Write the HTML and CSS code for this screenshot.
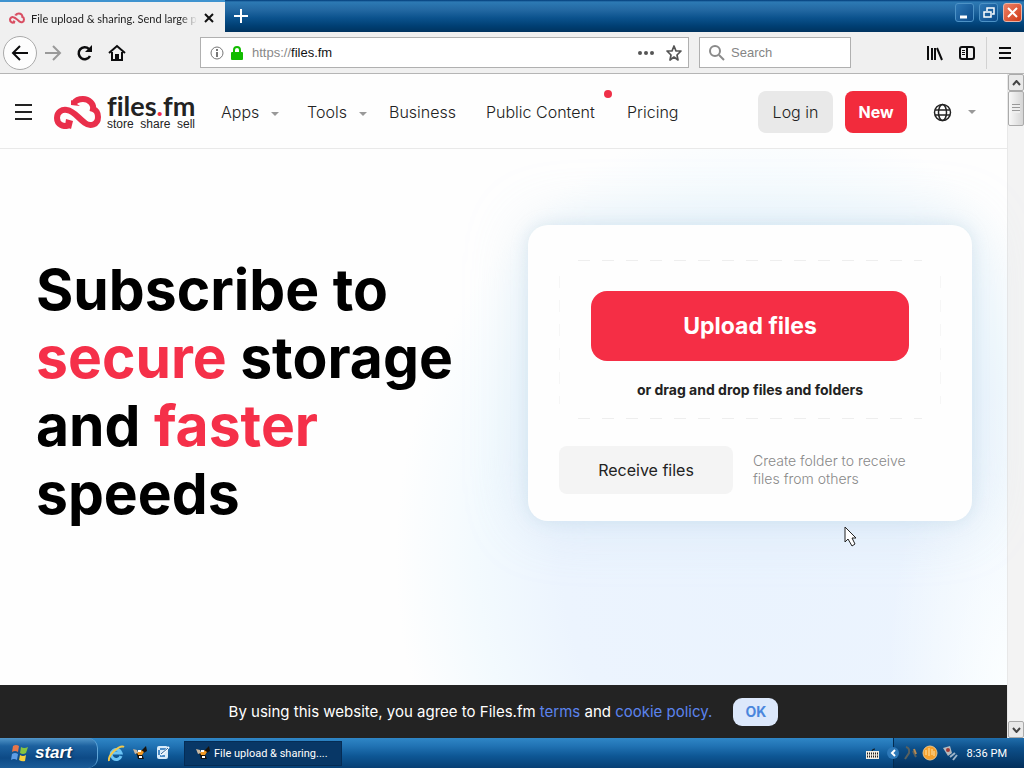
FILE: index.html
```html
<!DOCTYPE html>
<html lang="en">
<head>
<meta charset="utf-8">
<title>File upload &amp; sharing. Send large files</title>
<link rel="stylesheet" href="styles.css">
</head>
<body>
<svg class="defs" aria-hidden="true">
  <defs>
    <symbol id="cloud" viewBox="0 0 47 33">
      <path d="M16 29C9 32 3 28 3 22C3 16 8 13 13 14C20 15 24 22 31 27C36 31 44 29 44 21C44 17 42 14 39 13C40 8 35 3 29 3C26 3 22 4 20 7" fill="none" stroke="currentColor" stroke-width="6"/>
      <path d="M17 4L26 10L17 9ZM12 23L19 25L17 33L11 30Z" fill="currentColor"/>
    </symbol>
    <symbol id="butterfly" viewBox="0 0 16 14">
      <path d="M1 3L7 7L14 0L15 5L10 8L12 13L6 13L5 9Z" fill="#16120d"/>
      <path d="M5 6L9 4L12 6L10 9L6 9Z" fill="#f39a24"/>
      <path d="M1 3L5 4L6 7L3 8Z" fill="#c9b8a2"/>
      <path d="M6 5H9M7 11H10" stroke="#fff" stroke-width="2"/>
    </symbol>
  </defs>
</svg>

<header class="browser">
  <div class="titlebar">
    <div class="tab">
      <svg class="tab-logo"><use href="#cloud"/></svg>
      <span class="tab-title">File upload &amp; sharing. Send large p</span>
      <button class="plain" aria-label="Close tab"><svg width="12" height="12" viewBox="0 0 12 12"><path d="M2 2L10 10M10 2L2 10" stroke="#111" stroke-width="2"/></svg></button>
    </div>
    <button class="plain new-tab" aria-label="New tab"><svg width="14" height="14" viewBox="0 0 14 14"><path d="M7 0V14M0 7H14" stroke="#fff" stroke-width="2"/></svg></button>
    <div class="window-buttons">
      <button class="win" aria-label="Minimize"><svg width="18" height="18" viewBox="0 0 18 18"><path d="M4 13H11" stroke="#fff" stroke-width="3"/></svg></button>
      <button class="win" aria-label="Restore"><svg width="18" height="18" viewBox="0 0 18 18"><path d="M7 7V4H14V10H12M4 8H11V13H4Z" fill="none" stroke="#fff" stroke-width="1.500"/></svg></button>
      <button class="win win-close" aria-label="Close"><svg width="18" height="18" viewBox="0 0 18 18"><path d="M4 4L13 13M13 4L4 13" stroke="#fff" stroke-width="2"/></svg></button>
    </div>
  </div>
  <div class="toolbar">
    <div class="nav-buttons">
      <button class="plain back" aria-label="Back"><svg width="18" height="18" viewBox="0 0 18 18"><path d="M17 9H3M9 2L2 9L9 16" fill="none" stroke="#0c0c0d" stroke-width="2"/></svg></button>
      <button class="plain" aria-label="Forward"><svg width="18" height="18" viewBox="0 0 18 18"><path d="M1 9H15M9 2L16 9L9 16" fill="none" stroke="#9a9a9a" stroke-width="2"/></svg></button>
      <button class="plain" aria-label="Reload"><svg width="18" height="18" viewBox="0 0 18 18"><path d="M14 12A6 6 0 1 1 13 5" fill="none" stroke="#0c0c0d" stroke-width="2.500"/><path d="M16 1V8H9Z" fill="#0c0c0d"/></svg></button>
      <button class="plain" aria-label="Home"><svg width="18" height="18" viewBox="0 0 18 18"><path d="M1 9L9 2L17 9M4 8V16H14V8" fill="none" stroke="#0c0c0d" stroke-width="2"/><path d="M7 16V10H11V16Z" fill="#0c0c0d"/></svg></button>
    </div>
    <div class="field address">
      <svg width="14" height="14" viewBox="0 0 14 14"><circle cx="7" cy="7" r="6" fill="none" stroke="#777"/><path d="M7 6V11M7 3V5" stroke="#777" stroke-width="2"/></svg>
      <svg width="14" height="16" viewBox="0 0 14 16"><path d="M4 8V5A3 3 0 0 1 10 5V8" fill="none" stroke="#12bc00" stroke-width="2"/><rect x="1" y="7" width="12" height="8" rx="1" fill="#12bc00"/></svg>
      <a class="url" href="#">https://<b>files.fm</b></a>
      <button class="plain" aria-label="Page actions"><svg width="16" height="16" viewBox="0 0 16 16" fill="#555"><circle cx="2" cy="8" r="2"/><circle cx="8" cy="8" r="2"/><circle cx="14" cy="8" r="2"/></svg></button>
      <button class="plain" aria-label="Bookmark"><svg width="16" height="16" viewBox="0 0 16 16"><path d="M8 1L10 6L15 6L11 10L12 15L8 12L4 15L5 10L1 6L6 6Z" fill="none" stroke="#555" stroke-width="1.700" stroke-linejoin="round"/></svg></button>
    </div>
    <label class="field search">
      <svg width="17" height="17" viewBox="0 0 17 17"><circle cx="7" cy="7" r="5" fill="none" stroke="#8a8a8a" stroke-width="2"/><path d="M11 11L16 16" stroke="#8a8a8a" stroke-width="2"/></svg>
      <input type="search" placeholder="Search" aria-label="Search">
    </label>
    <div class="tools">
      <button class="plain" aria-label="Library"><svg width="16" height="16" viewBox="0 0 16 16"><path d="M1 1V15M5 3V15M8 3V15M10 3L15 15" stroke="#0c0c0d" stroke-width="2"/></svg></button>
      <button class="plain" aria-label="Sidebars"><svg width="16" height="16" viewBox="0 0 16 16"><rect x="1" y="2" width="14" height="12" rx="2" fill="none" stroke="#0c0c0d" stroke-width="2"/><path d="M8 2V14" stroke="#0c0c0d" stroke-width="2"/><path d="M3 5.500H6M3 7.500H6M3 9.500H6" stroke="#0c0c0d"/></svg></button>
      <span class="separator"></span>
      <button class="plain" aria-label="Menu"><svg width="14" height="14" viewBox="0 0 14 14"><path d="M1 2H13M1 7H13M1 12H13" stroke="#0c0c0d" stroke-width="2"/></svg></button>
    </div>
  </div>
</header>

<div class="viewport">
  <div class="page">
    <header class="site-header">
      <button class="plain burger" aria-label="Open menu"><svg width="17" height="16" viewBox="0 0 17 16"><path d="M0 1H17M0 8H17M0 15H17" stroke="#222" stroke-width="2"/></svg></button>
      <a class="logo" href="#">
        <svg class="logo-mark"><use href="#cloud"/></svg>
        <span class="logo-text"><span class="logo-name">files<i>.</i>fm</span><span class="logo-tag">store&nbsp; share&nbsp; sell</span></span>
      </a>
      <nav class="menu">
        <a class="has-menu" href="#">Apps</a>
        <a class="has-menu" href="#">Tools</a>
        <a href="#">Business</a>
        <a class="has-dot" href="#">Public Content</a>
        <a href="#">Pricing</a>
      </nav>
      <div class="account">
        <button class="btn login">Log in</button>
        <button class="btn new">New</button>
        <button class="plain language" aria-label="Language"><svg width="19" height="19" viewBox="0 0 19 19" fill="none" stroke="#222" stroke-width="1.500"><circle cx="9.500" cy="9.500" r="8"/><ellipse cx="9.500" cy="9.500" rx="4" ry="8"/><path d="M2 7H17M2 12H17"/></svg></button>
      </div>
    </header>

    <main class="hero">
      <h1>Subscribe to <em>secure</em> storage and <em>faster</em> speeds</h1>
      <section class="card">
        <div class="dropzone">
          <button class="upload">Upload files</button>
          <p>or drag and drop files and folders</p>
        </div>
        <div class="receive">
          <button>Receive files</button>
          <p>Create folder to receive files from others</p>
        </div>
        <svg class="cursor" width="14" height="22" viewBox="0 0 14 22"><path d="M1 1V16L4 13L8 20L11 18L8 12H12Z" fill="#fff" stroke="#222"/></svg>
      </section>
    </main>

    <footer class="cookies">
      <p>By using this website, you agree to Files.fm <a href="#">terms</a> and <a href="#">cookie policy.</a></p>
      <button>OK</button>
    </footer>
  </div>
  <div class="scrollbar">
    <button aria-label="Scroll up"><svg width="9" height="6" viewBox="0 0 9 6"><path d="M1 5L4.500 1L8 5" fill="none" stroke="#444" stroke-width="2"/></svg></button>
    <span class="thumb"></span>
    <button class="down" aria-label="Scroll down"><svg width="9" height="6" viewBox="0 0 9 6"><path d="M1 1L4.500 5L8 1" fill="none" stroke="#444" stroke-width="2"/></svg></button>
  </div>
</div>

<footer class="taskbar">
  <button class="start"><svg width="18" height="18" viewBox="0 0 18 18"><path d="M2 2Q5 0 8 2L7 8Q4 6 1 8Z" fill="#e8764a"/><path d="M10 3Q13 5 17 3L15 9Q12 11 9 9Z" fill="#86c440"/><path d="M1 10Q4 8 7 10L6 16Q3 14 0 16Z" fill="#5e9de6"/><path d="M9 11Q12 13 15 11L14 17Q11 18 8 16Z" fill="#f6d03c"/></svg>start</button>
  <div class="quick">
    <button class="plain" aria-label="Internet Explorer"><svg width="17" height="17" viewBox="0 0 17 17"><path d="M13 11A5 5 0 1 1 13 8H5" fill="none" stroke="#6cc4f5" stroke-width="3"/><path d="M1 16Q0 12 6 6Q13 0 16 2" fill="none" stroke="#f2c94c" stroke-width="2"/></svg></button>
    <button class="plain" aria-label="Web browser"><svg width="16" height="14"><use href="#butterfly"/></svg></button>
    <button class="plain" aria-label="Show desktop"><svg width="16" height="16" viewBox="0 0 16 16"><rect x="2" y="1" width="11" height="13" rx="2" fill="#d9ecfa"/><path d="M5 4H11M5 11H10M4 5V10" stroke="#4a8cc7" stroke-width="2"/><path d="M6 10L14 2" stroke="#fff" stroke-width="2"/><path d="M6 9L13 3" stroke="#245f96"/></svg></button>
  </div>
  <button class="task"><svg width="16" height="14"><use href="#butterfly"/></svg>File upload &amp; sharing....</button>
  <svg class="keyboard" width="13" height="11" viewBox="0 0 13 11"><path d="M6 3Q6 1 9 1" fill="none" stroke="#111"/><rect y="3" width="13" height="8" fill="#f3efe4"/><path d="M1 5.500H12M1 8.500H12" stroke="#222" stroke-width="2" stroke-dasharray="1 1"/></svg>
  <div class="tray">
    <button class="plain expand" aria-label="Show hidden icons"><svg width="12" height="14" viewBox="0 0 12 14"><circle cx="6" cy="7" r="6" fill="#2d78b8"/><path d="M8 4L5 7L8 10" fill="none" stroke="#fff" stroke-width="2"/></svg></button>
    <svg width="15" height="16" viewBox="0 0 15 16"><path d="M3 2Q7 3 6 8L2 14M10 6L13 12" fill="none" stroke="#59615f" stroke-width="2"/><path d="M11 4L13 9" stroke="#b98b52" stroke-width="2"/></svg>
    <svg width="16" height="16" viewBox="0 0 16 16"><circle cx="8" cy="8" r="7" fill="#f5a02c" stroke="#e9c48a"/><path d="M4 10V5M7 11V3M10 10V4M12 11V6" stroke="#ffe3a8"/></svg>
    <svg width="16" height="16" viewBox="0 0 16 16"><path d="M1 3L8 1L10 8L6 11Z" fill="#b5b9bd"/><circle cx="6" cy="5" r="2" fill="#a33b36"/><path d="M8 12L13 8M11 15L15 10" stroke="#9cb4c9" stroke-width="2"/></svg>
    <time>8:36 PM</time>
  </div>
</footer>
</body>
</html>
```
FILE: styles.css
```css
* { box-sizing: border-box; }
body {
  margin: 0;
  min-height: 100vh;
  display: flex;
  flex-direction: column;
  font-family: Inter, "Liberation Sans", sans-serif;
  background: #fefefe;
  color: #222;
}
p, h1 { margin: 0; }
a { color: inherit; text-decoration: none; }
button { font: inherit; color: inherit; border: 0; padding: 0; }
.defs { position: absolute; width: 0; height: 0; }
.plain { background: none; display: flex; align-items: center; justify-content: center; }
svg { display: block; flex: none; }

/* Browser chrome */
.browser { font: 13px "Liberation Sans", Arial, sans-serif; }
.titlebar {
  height: 32px;
  display: flex;
  align-items: stretch;
  background: linear-gradient(#003a77, #2d7ab4 2px, #2368a2 10px, #0b528d 18px, #003f73 26px, #00335f);
}
.tab {
  width: 225px;
  display: flex;
  align-items: center;
  padding: 2px 12px 0 9px;
  gap: 6px;
  background: #f0f0f0;
  border-top: 2px solid #3f93cf;
  font: 11px Lato, sans-serif;
}
.tab-logo { width: 16px; height: 12px; color: #d94e62; }
.tab-title {
  flex: 1;
  white-space: nowrap;
  mask-image: linear-gradient(90deg, #000 90%, transparent);
}
.new-tab { width: 32px; }
.window-buttons { margin-left: auto; display: flex; gap: 5px; padding: 3px 2px 0 0; }
.win {
  width: 19px;
  height: 19px;
  border: 1px solid #4d92c6;
  border-radius: 3px;
  background: linear-gradient(135deg, #2d77b5, #0b4b8a);
}
.win-close { border-color: #e9b3a5; background: linear-gradient(135deg, #ee8165, #cf3a18); }
.toolbar {
  height: 42px;
  display: flex;
  align-items: center;
  background: #f0f0f0;
  border-bottom: 1px solid #b5b5b5;
  padding: 0 9px 0 3px;
}
.nav-buttons { display: flex; align-items: center; gap: 14px; width: 197px; }
.back { width: 34px; height: 34px; border: 1px solid #aaa; border-radius: 50%; background: #fdfdfd; }
.nav-buttons .back { margin-right: -7px; }
.field {
  height: 31px;
  display: flex;
  align-items: center;
  background: #fff;
  border: 1px solid #b0b0b0;
}
.address { flex: 1; padding: 0 6px 0 9px; gap: 6px; }
.url { flex: 1; color: #888; padding-left: 2px; }
.url b { font-weight: 400; color: #111; }
.address .plain { margin-left: 6px; }
.search { width: 152px; margin-left: 10px; padding: 0 8px; gap: 6px; }
.search input { flex: 1; min-width: 0; border: 0; padding: 0; outline: 0; font: inherit; background: none; }
.search input::placeholder { color: #858585; }
.tools { width: 164px; display: flex; align-items: center; justify-content: flex-end; gap: 16px; padding-right: 3px; }
.separator { width: 1px; height: 32px; background: #d2d2d2; }
.tools .separator { margin: 0 -5px; }

/* Page */
.viewport { flex: 1; display: flex; }
.page { flex: 1; display: flex; flex-direction: column; min-width: 0; }
.site-header {
  height: 75px;
  display: flex;
  align-items: center;
  padding: 2px 31px 0 15px;
  border-bottom: 1px solid #e9e9e9;
  font-size: 16px;
  font-weight: 300;
}
.burger { margin-right: 22px; }
.logo { display: flex; align-items: center; gap: 6px; width: 167px; }
.logo-mark { width: 47px; height: 33px; color: #e92f4b; }
.logo-text { display: flex; flex-direction: column; }
.logo-name { font: 700 27px/24px Lato, sans-serif; font-variant-ligatures: none; }
.logo-name i { color: #f22e46; font-style: normal; }
.logo-tag { font: 12px/12px "Liberation Sans", sans-serif; }
.menu { display: grid; grid-template-columns: 86px 82px 97px 141px auto; }
.has-menu::after, .language::after {
  content: "";
  display: inline-block;
  border: 4px solid transparent;
  border-top-color: #999;
  border-bottom: 0;
  margin-left: 12px;
  vertical-align: middle;
}
.has-dot::after {
  content: "";
  position: absolute;
  width: 8px;
  height: 8px;
  margin: -12px 0 0 9px;
  border-radius: 50%;
  background: #ef3048;
}
.account { margin-left: auto; display: flex; align-items: center; gap: 12px; }
.btn { height: 42px; border-radius: 8px; }
.login { width: 75px; background: #e9e9e9; }
.new { width: 62px; background: #f22b3c; color: #fff; font-weight: 700; }
.language { margin-left: 14px; gap: 4px; }
.hero {
  flex: 1;
  display: grid;
  grid-template-columns: 1fr 444px;
  align-items: start;
  gap: 40px;
  padding: 76px 35px 0 36px;
  background:
    radial-gradient(ellipse 120px 300px at 100% 100%, #fbfeff, transparent),
    radial-gradient(ellipse 370px 440px at 76% 76%, #eaf3fe 0, #ecf4fe 55%, #f3fafe 78%, #fefefe 100%);
}
h1 { font-size: 57px; line-height: 68px; font-weight: 700; color: #000; padding-top: 31px; }
h1 em { color: #f53049; font-style: normal; }
.card {
  position: relative;
  padding: 35px 31px 27px;
  border-radius: 20px;
  background: #fefefe;
  box-shadow: 0 0 60px #b4d3e860, 0 0 16px #b4cfe060;
}
.dropzone {
  --dash: #eee 0 12px, transparent 12px 24px;
  height: 159px;
  padding: 31px 32px 0;
  background:
    repeating-linear-gradient(90deg, var(--dash)) top / 344px 1px no-repeat,
    repeating-linear-gradient(90deg, var(--dash)) bottom / 344px 1px no-repeat,
    repeating-linear-gradient(#f6f6f6 0 12px, transparent 12px 24px) left / 1px 128px no-repeat,
    repeating-linear-gradient(#f6f6f6 0 12px, transparent 12px 24px) right / 1px 128px no-repeat;
  text-align: center;
  font-size: 14px;
  font-weight: 700;
}
.upload {
  width: 100%;
  height: 70px;
  margin-bottom: 20px;
  border-radius: 16px;
  background: #f52e45;
  color: #fff;
  font-size: 23px;
  font-weight: 700;
}
.receive { display: flex; align-items: center; gap: 20px; margin-top: 27px; }
.receive button { width: 174px; height: 48px; border-radius: 8px; background: #f4f4f4; font-size: 16px; }
.receive p { flex: 1; padding-right: 24px; font-size: 14px; line-height: 18px; font-weight: 300; color: #888; }
.cursor { position: absolute; right: 114px; bottom: -27px; }
.cookies {
  height: 53px;
  display: flex;
  align-items: center;
  justify-content: center;
  gap: 21px;
  background: #232323;
  color: #fff;
  font-size: 15px;
}
.cookies a { color: #5c84ee; }
.cookies button { width: 45px; height: 28px; border-radius: 9px; background: #dce8fb; color: #4a86dd; font-size: 14px; font-weight: 700; }
.scrollbar {
  width: 17px;
  display: flex;
  flex-direction: column;
  background: #f3f3f3;
  border-left: 1px solid #e8e8e8;
}
.scrollbar button, .thumb { border: 1px solid #aaa; border-radius: 2px; background: #e9e9e9; }
.scrollbar button { height: 17px; display: grid; place-items: center; }
.scrollbar .thumb { height: 35px; background: repeating-linear-gradient(#999 0 1px, #eee 1px 3px) center / 8px 9px no-repeat, linear-gradient(90deg, #f8f8f8, #d5d5d5); }
.scrollbar .down { margin-top: auto; }

/* Taskbar */
.taskbar {
  height: 30px;
  display: flex;
  align-items: center;
  background: linear-gradient(#2f86c6, #2173b4 8px, #0e5795 18px, #073f74);
  color: #fff;
  font: 11px Roboto, sans-serif;
}
.start {
  width: 98px;
  height: 30px;
  display: flex;
  align-items: center;
  gap: 6px;
  padding-left: 11px;
  border-radius: 0 10px 10px 0;
  border-right: 1px solid #5fa5d8;
  background: linear-gradient(#5296c9, #1c619f 8px, #0d4a86 20px, #1b5c98);
  font: italic 700 17px "Liberation Sans", sans-serif;
  text-shadow: 1px 1px 2px #012a52;
}
.quick { width: 86px; display: flex; align-items: center; gap: 7px; padding-left: 10px; }
.task {
  width: 158px;
  height: 25px;
  display: flex;
  align-items: center;
  gap: 3px;
  padding-left: 10px;
  border: 1px solid #052c55;
  background: #083766;
}
.keyboard { margin: 0 14px 0 auto; }
.tray {
  align-self: stretch;
  display: flex;
  align-items: center;
  gap: 4px;
  padding-right: 17px;
  border-left: 1px solid #032b50;
  background: linear-gradient(#1f6dab, #0d4f89 10px, #022f5b);
}
.expand { margin-left: -7px; }
.tray time { margin-left: 5px; }
```
